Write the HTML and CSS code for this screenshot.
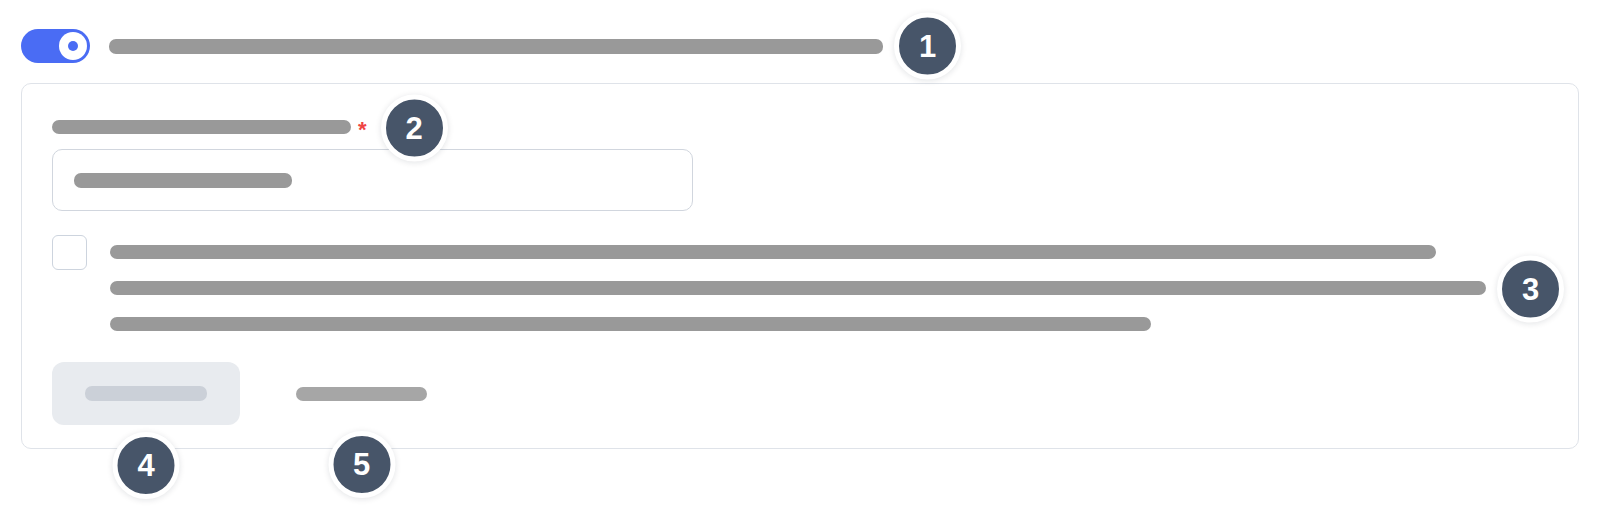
FILE: index.html
```html
<!DOCTYPE html>
<html lang="en">
<head>
<meta charset="utf-8">
<title>Form skeleton</title>
<link rel="stylesheet" href="styles.css">
</head>
<body>
  <div class="toggle-row">
    <div class="toggle"><span class="knob"><span class="dot"></span></span></div>
    <div class="bar bar-title anchor">
      <span class="badge badge-right">1</span>
    </div>
  </div>

  <div class="card">
    <div class="label-row anchor">
      <span class="bar bar-label"></span>
      <span class="req">*</span>
      <span class="badge badge-right badge-label">2</span>
    </div>

    <div class="input">
      <span class="bar bar-input"></span>
    </div>

    <div class="check-row">
      <span class="checkbox"></span>
      <div class="lines">
        <span class="bar line line-1"></span>
        <span class="bar line line-2 anchor"><span class="badge badge-right badge-line">3</span></span>
        <span class="bar line line-3"></span>
      </div>
    </div>

    <div class="actions">
      <div class="button anchor">
        <span class="bar bar-button"></span>
        <span class="badge badge-below badge-btn">4</span>
      </div>
      <div class="bar bar-link anchor">
        <span class="badge badge-below badge-link">5</span>
      </div>
    </div>
  </div>
</body>
</html>
```

FILE: styles.css
```css
html, body {
  margin: 0;
  background: #ffffff;
}

body {
  padding: 29px 21px 0;
  min-height: 510px;
  box-sizing: border-box;
  font-family: "Liberation Sans", Arial, sans-serif;
}

.anchor {
  position: relative;
}

.bar {
  display: block;
  height: 14px;
  border-radius: 7px;
  background: #999999;
}

.toggle-row {
  display: flex;
  align-items: center;
  gap: 19px;
  height: 34px;
}

.toggle {
  width: 69px;
  height: 34px;
  border-radius: 17px;
  background: #4a6cf4;
  display: flex;
  align-items: center;
  justify-content: flex-end;
  padding: 0 3px;
  box-sizing: border-box;
  flex: none;
}

.knob {
  width: 28px;
  height: 28px;
  border-radius: 50%;
  background: #ffffff;
  display: flex;
  align-items: center;
  justify-content: center;
}

.dot {
  width: 10px;
  height: 10px;
  border-radius: 50%;
  background: #4a6cf4;
}

.bar-title {
  width: 774px;
  height: 15px;
}

.badge {
  position: absolute;
  width: 57px;
  height: 57px;
  border: 5px solid #ffffff;
  border-radius: 50%;
  background: #475569;
  color: #ffffff;
  font-weight: 700;
  font-size: 31px;
  line-height: 57px;
  text-align: center;
  box-shadow: 0 1px 6px rgba(15, 23, 42, 0.12);
  z-index: 2;
}

.badge-right {
  top: 50%;
  left: calc(100% + 11px);
  transform: translateY(-50%);
}

.badge-below {
  left: 50%;
  transform: translateX(-50%);
}

.card {
  margin-top: 20px;
  border: 1px solid #dfe3e9;
  border-radius: 10px;
  padding: 36px 30px 23px;
}

.label-row {
  display: inline-flex;
  align-items: center;
  height: 14px;
  vertical-align: top;
}

.bar-label {
  width: 299px;
}

.req {
  margin-left: 7px;
  color: #ef4444;
  font-size: 22px;
  font-weight: 700;
  line-height: 14px;
  height: 14px;
  position: relative;
  top: 3px;
}

.badge-label {
  left: calc(100% + 14px);
  margin-top: 1px;
}

.input {
  margin-top: 11px;
  width: 641px;
  height: 62px;
  box-sizing: border-box;
  border: 1px solid #d1d6de;
  border-radius: 10px;
  padding: 0 21px;
  display: flex;
  align-items: center;
}

.bar-input {
  width: 218px;
  height: 15px;
}

.check-row {
  margin-top: 24px;
  display: flex;
  gap: 23px;
}

.checkbox {
  width: 35px;
  height: 35px;
  box-sizing: border-box;
  border: 1.5px solid #cdd4de;
  border-radius: 6px;
  flex: none;
}

.lines {
  margin-top: 10px;
  display: flex;
  flex-direction: column;
  gap: 22px;
}

.line-1 { width: 1326px; }
.line-2 { width: 1376px; }
.line-3 { width: 1041px; }

.badge-line {
  left: calc(100% + 11px);
  margin-top: 1px;
}

.actions {
  margin-top: 31px;
  display: flex;
  align-items: center;
  gap: 56px;
}

.button {
  width: 188px;
  height: 63px;
  border-radius: 12px;
  background: #e8ebef;
  display: flex;
  align-items: center;
  justify-content: center;
}

.bar-button {
  width: 122px;
  height: 15px;
  background: #cbd0d8;
}

.badge-btn {
  top: calc(100% + 7px);
}

.bar-link {
  width: 131px;
  background: #a6a6a6;
}

.badge-link {
  top: calc(100% + 30px);
}
```
